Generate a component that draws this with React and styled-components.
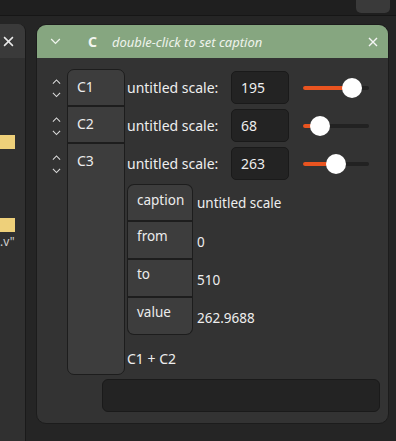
import React from "react";
import styled, { createGlobalStyle } from "styled-components";

const GlobalStyle = createGlobalStyle`
  html, body {
    margin: 0;
    padding: 0;
    background: #242424;
    font-family: "Noto Sans", "Open Sans", sans-serif;
    overflow: hidden;
  }
`;

const Screen = styled.div`
  width: 396px;
  height: 441px;
  display: flex;
  flex-direction: column;
  background: #252525;
  overflow: hidden;
`;

const TopBar = styled.div`
  height: 15px;
  flex-shrink: 0;
  background: #1f1f1f;
  border-bottom: 1px solid #161616;
  display: flex;
  justify-content: flex-end;
  padding-right: 6px;
`;

const TopButton = styled.div`
  width: 34px;
  height: 13px;
  background: #3a3a3a;
  border-radius: 0 0 5px 5px;
`;

const Stage = styled.div`
  flex: 1;
  display: flex;
  padding-top: 8px;
`;

const SidePanel = styled.div`
  width: 25px;
  flex-shrink: 0;
  background: #303030;
  border-right: 1px solid #1a1a1a;
  border-top-right-radius: 8px;
  display: flex;
  flex-direction: column;
  overflow: hidden;
`;

const SideHeader = styled.div`
  height: 34px;
  background: #3a3a3a;
  display: flex;
  align-items: center;
  justify-content: flex-start;
  padding-left: 3px;
`;

const YellowBlock = styled.div`
  width: 15px;
  height: 14px;
  background: #eed07a;
  margin-top: ${(p) => p.top}px;
`;

const SideText = styled.div`
  color: #cfcfcf;
  font-size: 12px;
  margin-top: 3px;
  line-height: 14px;
`;

const Window = styled.div`
  width: 351px;
  height: 398px;
  margin-left: 10px;
  background: #333333;
  border: 1px solid #1c1c1c;
  border-radius: 10px;
  display: flex;
  flex-direction: column;
  overflow: hidden;
`;

const Header = styled.div`
  height: 33px;
  flex-shrink: 0;
  background: #86a680;
  display: flex;
  align-items: center;
  padding: 0 10px 0 13px;
`;

const HeaderTitle = styled.span`
  font-weight: bold;
  font-size: 14px;
  color: #f2f5f0;
  margin-left: 27px;
`;

const HeaderCaption = styled.span`
  font-style: italic;
  font-size: 13px;
  color: #eef3ec;
  margin-left: 15px;
  flex: 1;
`;

const Body = styled.div`
  flex: 1;
  display: flex;
  flex-direction: column;
  padding: 11px 8px 0 9px;
`;

const Main = styled.div`
  display: flex;
  height: 306px;
`;

const ArrowColumn = styled.div`
  width: 21px;
  display: flex;
  flex-direction: column;
`;

const ArrowPair = styled.div`
  height: 38px;
  display: flex;
  flex-direction: column;
  align-items: center;
  justify-content: center;
  gap: 8px;
`;

const TabColumn = styled.div`
  width: 56px;
  background: #3d3d3d;
  border: 1px solid #1d1d1d;
  border-radius: 7px;
  display: flex;
  flex-direction: column;
`;

const Tab = styled.div`
  height: 37px;
  border-bottom: ${(p) => (p.last ? "none" : "2px solid #1d1d1d")};
  color: #ececec;
  font-size: 14px;
  padding: 7px 0 0 9px;
  box-sizing: border-box;
`;

const Content = styled.div`
  flex: 1;
  display: flex;
  flex-direction: column;
  padding-left: 2px;
`;

const ScaleRow = styled.div`
  height: 33px;
  margin-top: ${(p) => (p.first ? 2 : 5)}px;
  display: flex;
  align-items: center;
`;

const Label = styled.div`
  width: 104px;
  color: #eeeeee;
  font-size: 14px;
`;

const NumberBox = styled.div`
  width: 58px;
  height: 33px;
  box-sizing: border-box;
  background: #232323;
  border: 1px solid #1a1a1a;
  border-radius: 5px;
  color: #eeeeee;
  font-size: 14px;
  display: flex;
  align-items: center;
  padding-left: 9px;
`;

const Slider = styled.div`
  position: relative;
  width: 66px;
  height: 20px;
  margin-left: 14px;
  display: flex;
  align-items: center;
`;

const Track = styled.div`
  width: 100%;
  height: 4px;
  background: #222222;
  border-radius: 2px;
  overflow: hidden;
`;

const Fill = styled.div`
  height: 100%;
  background: #e95420;
`;

const Thumb = styled.div`
  position: absolute;
  top: 0;
  width: 20px;
  height: 20px;
  margin-left: -10px;
  border-radius: 50%;
  background: #ffffff;
`;

const PropTable = styled.div`
  display: flex;
  flex-direction: column;
  margin-top: 4px;
`;

const PropRow = styled.div`
  display: flex;
  height: ${(p) => (p.last ? 37 : 38)}px;
`;

const PropKey = styled.div`
  width: 66px;
  box-sizing: border-box;
  background: #3d3d3d;
  border-left: 1px solid #1d1d1d;
  border-right: 1px solid #1d1d1d;
  border-top: ${(p) => (p.first ? "1px solid #1d1d1d" : "none")};
  border-bottom: ${(p) => (p.last ? "1px solid #1d1d1d" : "2px solid #1d1d1d")};
  border-radius: ${(p) =>
    p.first ? "7px 7px 0 0" : p.last ? "0 0 7px 7px" : "0"};
  color: #ececec;
  font-size: 13.5px;
  padding: ${(p) => (p.first ? 6 : 5)}px 0 0 9px;
`;

const PropValue = styled.div`
  color: #eeeeee;
  font-size: 13.5px;
  padding: ${(p) => (p.first ? 10 : 11)}px 0 0 4px;
`;

const Formula = styled.div`
  color: #eeeeee;
  font-size: 14px;
  margin-top: 14px;
`;

const Footer = styled.div`
  height: 33px;
  margin: 4px 0 0 56px;
  background: #232323;
  border: 1px solid #1a1a1a;
  border-radius: 6px;
  box-sizing: border-box;
`;

const Chevron = ({ up, size = 9, color = "#dcdcdc" }) => (
  <svg width={size} height={size / 2 + 1} viewBox="0 0 10 6">
    <path
      d={up ? "M1 5 L5 1 L9 5" : "M1 1 L5 5 L9 1"}
      fill="none"
      stroke={color}
      strokeWidth="1.2"
    />
  </svg>
);

const Cross = ({ size = 10, color = "#f2f2f2" }) => (
  <svg width={size} height={size} viewBox="0 0 10 10">
    <path d="M1 1 L9 9 M9 1 L1 9" stroke={color} strokeWidth="1.4" />
  </svg>
);

const scales = [
  { name: "C1", value: "195", pos: 0.85 },
  { name: "C2", value: "68", pos: 0.15 },
  { name: "C3", value: "263", pos: 0.5 },
];

const props = [
  { key: "caption", value: "untitled scale" },
  { key: "from", value: "0" },
  { key: "to", value: "510" },
  { key: "value", value: "262.9688" },
];

export default function App() {
  return (
    <>
      <GlobalStyle />
      <Screen>
        <TopBar>
          <TopButton />
        </TopBar>
        <Stage>
          <SidePanel>
            <SideHeader>
              <Cross size={11} color="#e8e8e8" />
            </SideHeader>
            <YellowBlock top={77} />
            <YellowBlock top={69} />
            <SideText>.v"</SideText>
          </SidePanel>
          <Window>
            <Header>
              <Chevron size={11} color="#eef3ec" />
              <HeaderTitle>C</HeaderTitle>
              <HeaderCaption>double-click to set caption</HeaderCaption>
              <Cross size={10} color="#f5f5f5" />
            </Header>
            <Body>
              <Main>
                <ArrowColumn>
                  {scales.map((s) => (
                    <ArrowPair key={s.name}>
                      <Chevron up />
                      <Chevron />
                    </ArrowPair>
                  ))}
                </ArrowColumn>
                <TabColumn>
                  {scales.map((s, i) => (
                    <Tab key={s.name} last={i === scales.length - 1}>
                      {s.name}
                    </Tab>
                  ))}
                </TabColumn>
                <Content>
                  {scales.map((s, i) => (
                    <ScaleRow key={s.name} first={i === 0}>
                      <Label>untitled scale:</Label>
                      <NumberBox>{s.value}</NumberBox>
                      <Slider>
                        <Track>
                          <Fill style={{ width: `${10 + s.pos * 46}px` }} />
                        </Track>
                        <Thumb style={{ left: `${10 + s.pos * 46}px` }} />
                      </Slider>
                    </ScaleRow>
                  ))}
                  <PropTable>
                    {props.map((p, i) => (
                      <PropRow key={p.key} last={i === props.length - 1}>
                        <PropKey first={i === 0} last={i === props.length - 1}>
                          {p.key}
                        </PropKey>
                        <PropValue first={i === 0}>{p.value}</PropValue>
                      </PropRow>
                    ))}
                  </PropTable>
                  <Formula>C1 + C2</Formula>
                </Content>
              </Main>
              <Footer />
            </Body>
          </Window>
        </Stage>
      </Screen>
    </>
  );
}
